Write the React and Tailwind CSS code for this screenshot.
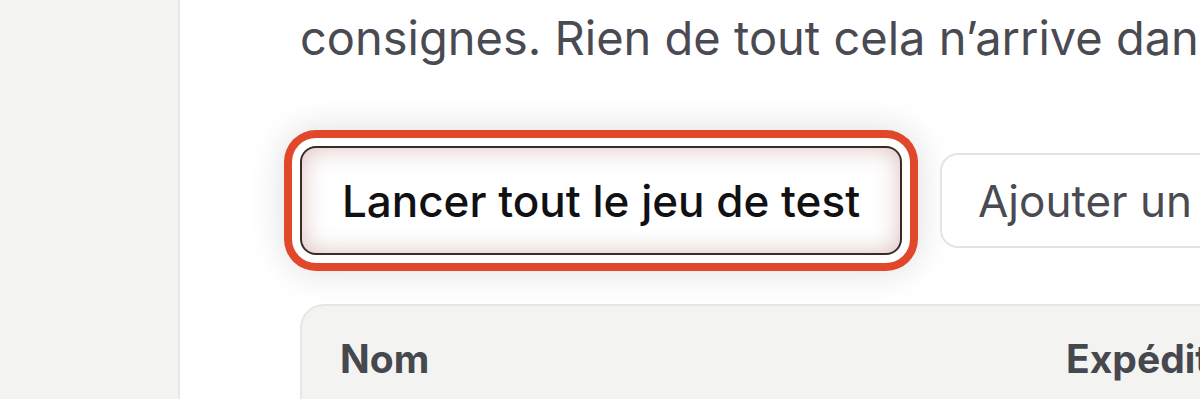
const App = () => {
  return (
    <div
      className="flex h-[399px] w-[1200px] overflow-hidden bg-white"
      style={{ fontFamily: 'Inter, "Noto Sans", sans-serif' }}
    >
      {/* Sidebar */}
      <aside className="w-[180px] shrink-0 border-r-2 border-[#e7e7e5] bg-[#f3f3f2]" />

      {/* Main */}
      <main className="flex min-w-0 flex-1 flex-col pl-[120px]">
        <p className="mt-[10px] whitespace-nowrap text-[47px] leading-[56px] text-[#4a4a52]">
          consignes. Rien de tout cela n’arrive dans votre boîte de réception.
        </p>

        <div className="mt-[80px] flex items-center gap-[38px] whitespace-nowrap">
          <button className="flex h-[109px] w-[602px] shrink-0 items-center justify-center rounded-[16px] border-2 border-[#3a2a28] bg-white text-[44px] font-medium text-[#111114] shadow-[inset_0_0_24px_rgba(165,105,95,0.42),0_0_0_8px_#ffffff,0_0_0_16px_#e1482b,0_0_34px_18px_rgba(0,0,0,0.12)]">
            Lancer tout le jeu de test
          </button>
          <button className="flex h-[95px] shrink-0 items-center rounded-[18px] border-2 border-[#e4e4e2] bg-white px-[36px] text-[44px] text-[#4a4a52]">
            Ajouter un message de test
          </button>
        </div>

        <div className="mt-[49px] flex h-[140px] w-[1100px] shrink-0 rounded-t-[24px] border-2 border-[#e6e6e4] bg-[#f3f3f1] pt-[24px] whitespace-nowrap">
          <div className="w-[764px] pl-[38px] text-[39px] font-bold text-[#47474f]">Nom</div>
          <div className="text-[39px] font-bold text-[#47474f]">Expéditeur</div>
        </div>
      </main>
    </div>
  )
}

export default App
